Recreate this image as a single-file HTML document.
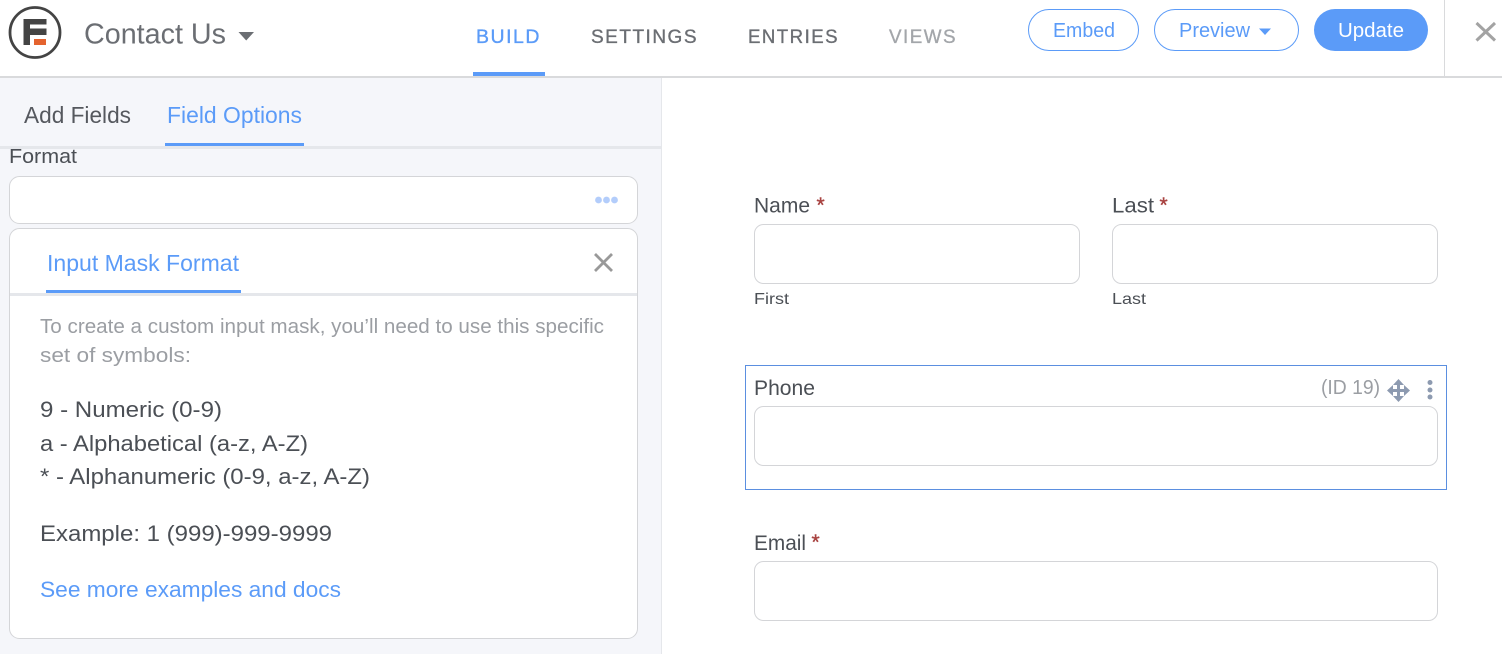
<!DOCTYPE html>
<html><head><meta charset="utf-8"><title>Contact Us</title>
<style>
html,body{margin:0;padding:0;background:#fff}
svg{display:block}
text{font-family:"Liberation Sans",sans-serif;white-space:pre}
</style></head><body>
<svg width="1502" height="654" viewBox="0 0 1502 654" xmlns="http://www.w3.org/2000/svg">
<rect width="1502" height="654" fill="#fff"/>
<rect x="0" y="78" width="661" height="576" fill="#f5f6fa"/>
<rect x="661" y="78" width="1" height="576" fill="#e5e7eb"/>
<rect x="0" y="76" width="1502" height="2" fill="#d9dadc"/>
<rect x="1444" y="0" width="1" height="76" fill="#d9dadc"/>
<circle cx="35" cy="32.500" r="25" fill="none" stroke="#444" stroke-width="2.800"/>
<rect x="23.500" y="19" width="23" height="5.500" fill="#444"/>
<rect x="23.500" y="19" width="6.500" height="26" fill="#444"/>
<rect x="23.500" y="28.500" width="23" height="6.500" fill="#444"/>
<rect x="34" y="39" width="12" height="6" fill="#e4632f"/>
<text x="84" y="43.500" font-size="29" fill="#6b6e73" textLength="142" lengthAdjust="spacingAndGlyphs">Contact Us</text>
<path d="M238.500 32H254L246.200 40.500Z" fill="#6b6e73"/>
<text x="476" y="43" font-size="19" fill="#5b9bf8" stroke="#5b9bf8" stroke-width=".35" textLength="65" lengthAdjust="spacingAndGlyphs" style="letter-spacing:1.5px">BUILD</text>
<text x="591" y="43" font-size="19" fill="#6b6e73" stroke="#6b6e73" stroke-width=".35" textLength="107" lengthAdjust="spacingAndGlyphs" style="letter-spacing:1.5px">SETTINGS</text>
<text x="748" y="43" font-size="19" fill="#6b6e73" stroke="#6b6e73" stroke-width=".35" textLength="91" lengthAdjust="spacingAndGlyphs" style="letter-spacing:1.5px">ENTRIES</text>
<text x="889" y="43" font-size="19" fill="#a3a6aa" stroke="#a3a6aa" stroke-width=".35" textLength="68" lengthAdjust="spacingAndGlyphs" style="letter-spacing:1.5px">VIEWS</text>
<rect x="473" y="72" width="72" height="4" fill="#5b9bf8"/>
<rect x="1028.500" y="9.500" width="110" height="41" rx="20.500" fill="#fff" stroke="#5b9bf8"/>
<text x="1053" y="37" font-size="20" fill="#5b9bf8" textLength="62" lengthAdjust="spacingAndGlyphs">Embed</text>
<rect x="1154.500" y="9.500" width="144" height="41" rx="20.500" fill="#fff" stroke="#5b9bf8"/>
<text x="1179" y="37" font-size="20" fill="#5b9bf8" textLength="71" lengthAdjust="spacingAndGlyphs">Preview</text>
<path d="M1259 28.500H1271L1265 35Z" fill="#5b9bf8"/>
<rect x="1314" y="9" width="114" height="42" rx="21" fill="#5b9bf8"/>
<text x="1338" y="37" font-size="20" fill="#fff" textLength="66" lengthAdjust="spacingAndGlyphs">Update</text>
<path d="M1476.500 23L1495 40.500M1495 23L1476.500 40.500" stroke="#a3a3a3" stroke-width="3" fill="none"/>
<text x="24" y="123" font-size="23" fill="#55585e" textLength="107" lengthAdjust="spacingAndGlyphs">Add Fields</text>
<text x="167" y="123" font-size="23" fill="#5b9bf8" textLength="135" lengthAdjust="spacingAndGlyphs">Field Options</text>
<rect x="0" y="146" width="661" height="3" fill="#e5e7eb"/>
<rect x="165" y="143" width="139" height="3" fill="#5b9bf8"/>
<text x="9" y="163" font-size="20" fill="#4b4f55" textLength="68" lengthAdjust="spacingAndGlyphs">Format</text>
<rect x="9.500" y="176.500" width="628" height="47" rx="10" fill="#fff" stroke="#d4d5d8"/>
<circle cx="598.500" cy="200" r="3.400" fill="#b3cdfb"/>
<circle cx="606.500" cy="200" r="3.400" fill="#b3cdfb"/>
<circle cx="614.500" cy="200" r="3.400" fill="#b3cdfb"/>
<rect x="9.500" y="228.500" width="628" height="410" rx="10" fill="#fff" stroke="#d4d5d8"/>
<rect x="10" y="293" width="627" height="3" fill="#e5e7eb"/>
<rect x="46" y="290" width="195" height="3" fill="#5b9bf8"/>
<text x="47" y="271" font-size="23" fill="#5b9bf8" textLength="192" lengthAdjust="spacingAndGlyphs">Input Mask Format</text>
<path d="M595 254L612 271M612 254L595 271" stroke="#999" stroke-width="2.800" fill="none"/>
<text x="40" y="333" font-size="20" fill="#9b9ea3" textLength="564" lengthAdjust="spacingAndGlyphs">To create a custom input mask, you’ll need to use this specific</text>
<text x="40" y="362" font-size="20" fill="#9b9ea3" textLength="151" lengthAdjust="spacingAndGlyphs">set of symbols:</text>
<text x="40" y="417" font-size="22" fill="#4b4f55" textLength="182" lengthAdjust="spacingAndGlyphs">9 - Numeric (0-9)</text>
<text x="40" y="451" font-size="22" fill="#4b4f55" textLength="268" lengthAdjust="spacingAndGlyphs">a - Alphabetical (a-z, A-Z)</text>
<text x="40" y="484" font-size="22" fill="#4b4f55" textLength="330" lengthAdjust="spacingAndGlyphs">* - Alphanumeric (0-9, a-z, A-Z)</text>
<text x="40" y="541" font-size="22" fill="#4b4f55" textLength="292" lengthAdjust="spacingAndGlyphs">Example: 1 (999)-999-9999</text>
<text x="40" y="597" font-size="22" fill="#5b9bf8" textLength="301" lengthAdjust="spacingAndGlyphs">See more examples and docs</text>
<text x="754" y="212.500" font-size="21" fill="#4b4f55" textLength="56" lengthAdjust="spacingAndGlyphs">Name</text>
<text x="816.500" y="212" font-size="21" fill="#a94442" stroke="#a94442" stroke-width=".4">*</text>
<text x="1112" y="212.500" font-size="21" fill="#4b4f55" textLength="42" lengthAdjust="spacingAndGlyphs">Last</text>
<text x="1159.500" y="212" font-size="21" fill="#a94442" stroke="#a94442" stroke-width=".4">*</text>
<rect x="754.500" y="224.500" width="325" height="59" rx="9" fill="#fff" stroke="#d4d5d8"/>
<rect x="1112.500" y="224.500" width="325" height="59" rx="9" fill="#fff" stroke="#d4d5d8"/>
<text x="754" y="304" font-size="16" fill="#4b4f55" textLength="35" lengthAdjust="spacingAndGlyphs">First</text>
<text x="1112" y="304" font-size="16" fill="#4b4f55" textLength="34" lengthAdjust="spacingAndGlyphs">Last</text>
<rect x="745.500" y="365.500" width="701" height="124" fill="#fff" stroke="#5b8fe0"/>
<text x="754" y="395" font-size="21" fill="#4b4f55" textLength="61" lengthAdjust="spacingAndGlyphs">Phone</text>
<text x="1321" y="394" font-size="20" fill="#9b9ea3" textLength="59" lengthAdjust="spacingAndGlyphs">(ID 19)</text>
<path d="M1398.500 382V399M1390 390.500H1407" stroke="#8d9ab0" stroke-width="3" fill="none"/>
<path d="M1398.500 379L1404 385H1393ZM1398.500 402L1404 396H1393ZM1387 390.500L1393 385V396ZM1410 390.500L1404 385V396Z" fill="#8d9ab0"/>
<circle cx="1430" cy="382.500" r="2.500" fill="#8d9ab0"/>
<circle cx="1430" cy="390" r="2.500" fill="#8d9ab0"/>
<circle cx="1430" cy="397" r="2.500" fill="#8d9ab0"/>
<rect x="754.500" y="406.500" width="683" height="59" rx="9" fill="#fff" stroke="#d4d5d8"/>
<text x="754" y="550" font-size="21" fill="#4b4f55" textLength="52" lengthAdjust="spacingAndGlyphs">Email</text>
<text x="811.500" y="549" font-size="21" fill="#a94442" stroke="#a94442" stroke-width=".4">*</text>
<rect x="754.500" y="561.500" width="683" height="59" rx="9" fill="#fff" stroke="#d4d5d8"/>
</svg>
</body></html>
